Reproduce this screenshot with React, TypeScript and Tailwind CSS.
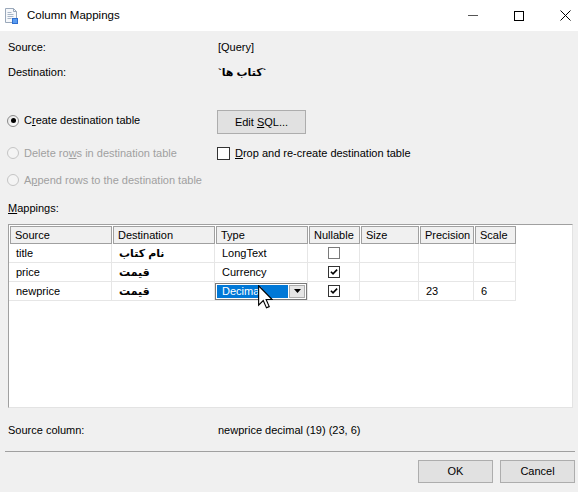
import React from 'react';

const cols = [
  { label: 'Source', w: 'w-[103px]' },
  { label: 'Destination', w: 'w-[103px]' },
  { label: 'Type', w: 'w-[93px]' },
  { label: 'Nullable', w: 'w-[52px]' },
  { label: 'Size', w: 'w-[59px]' },
  { label: 'Precision', w: 'w-[55px]' },
  { label: 'Scale', w: 'w-[42px]' },
];

const rows = [
  { source: 'title', dest: 'نام کتاب', type: 'LongText', nullable: false, precision: '', scale: '', editing: false },
  { source: 'price', dest: 'قیمت', type: 'Currency', nullable: true, precision: '', scale: '', editing: false },
  { source: 'newprice', dest: 'قیمت', type: 'Decimal', nullable: true, precision: '23', scale: '6', editing: true },
];

const Radio = ({ checked, disabled }: { checked?: boolean; disabled?: boolean }) => (
  <span
    className={
      'ml-[-1px] flex h-[12px] w-[12px] shrink-0 items-center justify-center rounded-full border ' +
      (disabled ? 'border-[#c4c4c4] bg-[#f4f4f4]' : 'border-[#8a8a8a] bg-gradient-to-br from-[#e6e6e6] to-white')
    }
  >
    {checked && <span className="h-[5px] w-[5px] rounded-full bg-black" />}
  </span>
);

const Check = ({ checked, dark, small }: { checked?: boolean; dark?: boolean; small?: boolean }) => (
  <span
    className={
      'flex shrink-0 items-center justify-center border bg-white ' +
      (small ? 'h-[12px] w-[12px] ' : 'h-[13px] w-[13px] ') +
      (dark ? 'border-[#333333]' : 'border-[#7a7a7a]')
    }
  >
    {checked && (
      <svg width="8" height="8" viewBox="0 0 9 9">
        <path d="M1 4.2 L3.4 6.6 L8 1.8" fill="none" stroke="#000" strokeWidth="1.8" />
      </svg>
    )}
  </span>
);

const WinButton = ({ children, w }: { children: React.ReactNode; w: string }) => (
  <div className={'flex h-[23px] items-center justify-center border border-[#adadad] bg-[#e1e1e1] ' + w}>{children}</div>
);

const Cursor = () => (
  <svg className="pointer-events-none absolute left-[43px] top-[3px]" width="15" height="24" viewBox="0 0 12 19">
    <path d="M0.5 0.5 L0.5 16 L4.2 12.3 L6.8 18.2 L9 17.2 L6.5 11.5 L11.3 11.5 Z" fill="#fff" stroke="#000" strokeWidth="0.9" />
  </svg>
);

export default function App() {
  return (
    <div className="relative flex h-[492px] w-[578px] flex-col overflow-hidden bg-[#f0f0f0] font-['Liberation_Sans','DejaVu_Sans',sans-serif] text-[11px] leading-[13px] text-black">
      {/* title bar */}
      <div className="flex h-[31px] shrink-0 items-center bg-white">
        <svg className="ml-[4px]" width="16" height="16" viewBox="0 0 16 16">
          <path d="M1.5 0.5h8l3 3v11h-11z" fill="#f6f8fb" stroke="#9aa8ba" />
          <path d="M9.5 0.5v3h3" fill="none" stroke="#9aa8ba" />
          <path d="M3.5 4.5h4M3.5 6.5h6M3.5 8.5h6M3.5 10.5h4" stroke="#a9b6c7" />
          <rect x="8" y="10" width="6" height="6" fill="#2f6fcf" />
          <rect x="9" y="11" width="4" height="4" fill="#5a9cf0" />
        </svg>
        <span className="ml-[7px] text-[11.5px]">Column Mappings</span>
        <div className="flex-1" />
        <div className="mr-[-10px] flex h-full">
          <div className="flex w-[46px] items-center justify-center">
            <div className="h-px w-[10px] bg-[#555]" />
          </div>
          <div className="flex w-[46px] items-center justify-center">
            <div className="h-[10px] w-[10px] border border-black" />
          </div>
          <div className="flex w-[46px] items-center justify-center">
            <svg width="11" height="11" viewBox="0 0 11 11">
              <path d="M0.5 0.5 L10.5 10.5 M10.5 0.5 L0.5 10.5" stroke="#000" strokeWidth="1" />
            </svg>
          </div>
        </div>
      </div>

      {/* source / destination */}
      <div className="mt-[4px] flex h-[25px] items-center pl-2">
        <span className="w-[210px]">Source:</span>
        <span>[Query]</span>
      </div>
      <div className="flex h-[25px] items-center pl-2">
        <span className="w-[210px]">Destination:</span>
        <span className="font-bold">`کتاب ها`</span>
      </div>

      {/* options */}
      <div className="mt-[25px] flex h-[24px] items-center pl-2">
        <div className="-mt-[3px] flex w-[209px] items-center gap-[5px]">
          <Radio checked />
          <span>
            C<span className="underline">r</span>eate destination table
          </span>
        </div>
        <WinButton w="w-[89px] h-[24px]">
          <span>
            Edit <span className="underline">S</span>QL...
          </span>
        </WinButton>
      </div>
      <div className="mt-[7px] flex h-[24px] items-center pl-2">
        <div className="flex w-[209px] items-center gap-[5px] text-[#a0a0a0]">
          <Radio disabled />
          <span>
            Delete ro<span className="underline">w</span>s in destination table
          </span>
        </div>
        <div className="flex items-center gap-[5px]">
          <Check dark />
          <span>
            <span className="underline">D</span>rop and re-create destination table
          </span>
        </div>
      </div>
      <div className="mt-[3px] flex h-[24px] items-center pl-2">
        <div className="flex items-center gap-[5px] text-[#a0a0a0]">
          <Radio disabled />
          <span>
            A<span className="underline">p</span>pend rows to the destination table
          </span>
        </div>
      </div>

      <div className="mt-[9px] h-[14px] pl-2 leading-[14px]">
        <span className="underline">M</span>appings:
      </div>

      {/* grid */}
      <div className="ml-2 mt-[9px] h-[184px] w-[565px] shrink-0 border border-[#a0a0a0] border-b-[#e3e3e3] border-r-[#e3e3e3] bg-white">
        <div className="mt-px flex h-[18px]">
          {cols.map((c) => (
            <div key={c.label} className={'flex h-full pl-px ' + c.w}>
              <div className="flex flex-1 items-center border border-[#a0a0a0] bg-[#f0f0f0] pl-[4px]">{c.label}</div>
            </div>
          ))}
        </div>
        {rows.map((r) => (
          <div key={r.source} className="flex h-[19px]">
            <div className={'flex items-center border-b border-r border-[#e6e6e6] pl-[7px] ' + cols[0].w}>{r.source}</div>
            <div className={'flex items-center border-b border-r border-[#e6e6e6] pl-[7px] font-bold ' + cols[1].w}>
              <span dir="rtl">{r.dest}</span>
            </div>
            {r.editing ? (
              <div className={'relative flex items-center border-b border-r border-[#e6e6e6] ' + cols[2].w}>
                <div className="flex h-[17px] w-full border border-[#7a7a7a] bg-white p-px">
                  <div className="flex flex-1 items-center bg-[#0078d7] pl-[5px] text-white">Decimal</div>
                  <div className="ml-px flex w-[16px] items-center justify-center border border-[#acacac] bg-[#e5e5e5]">
                    <svg width="7" height="4" viewBox="0 0 7 4">
                      <path d="M0 0 H7 L3.5 4 Z" fill="#000" />
                    </svg>
                  </div>
                </div>
                <Cursor />
              </div>
            ) : (
              <div className={'flex items-center border-b border-r border-[#e6e6e6] pl-[7px] ' + cols[2].w}>{r.type}</div>
            )}
            <div className={'flex items-center justify-center border-b border-r border-[#e6e6e6] ' + cols[3].w}>
              <Check small checked={r.nullable} dark={r.nullable} />
            </div>
            <div className={'flex items-center border-b border-r border-[#e6e6e6] pl-[7px] ' + cols[4].w} />
            <div className={'flex items-center border-b border-r border-[#e6e6e6] pl-[7px] ' + cols[5].w}>{r.precision}</div>
            <div className={'flex items-center border-b border-r border-[#e6e6e6] pl-[7px] ' + cols[6].w}>{r.scale}</div>
          </div>
        ))}
      </div>

      {/* status */}
      <div className="mt-[15px] flex h-[14px] items-center pl-2">
        <span className="w-[210px]">Source column:</span>
        <span>newprice decimal (19) (23, 6)</span>
      </div>

      <div className="ml-[5px] mt-[14px] h-px w-[570px] bg-[#a0a0a0]" />

      <div className="mt-[8px] flex justify-end gap-[7px] pr-[3px]">
        <WinButton w="w-[75px]">OK</WinButton>
        <WinButton w="w-[75px]">Cancel</WinButton>
      </div>
    </div>
  );
}
